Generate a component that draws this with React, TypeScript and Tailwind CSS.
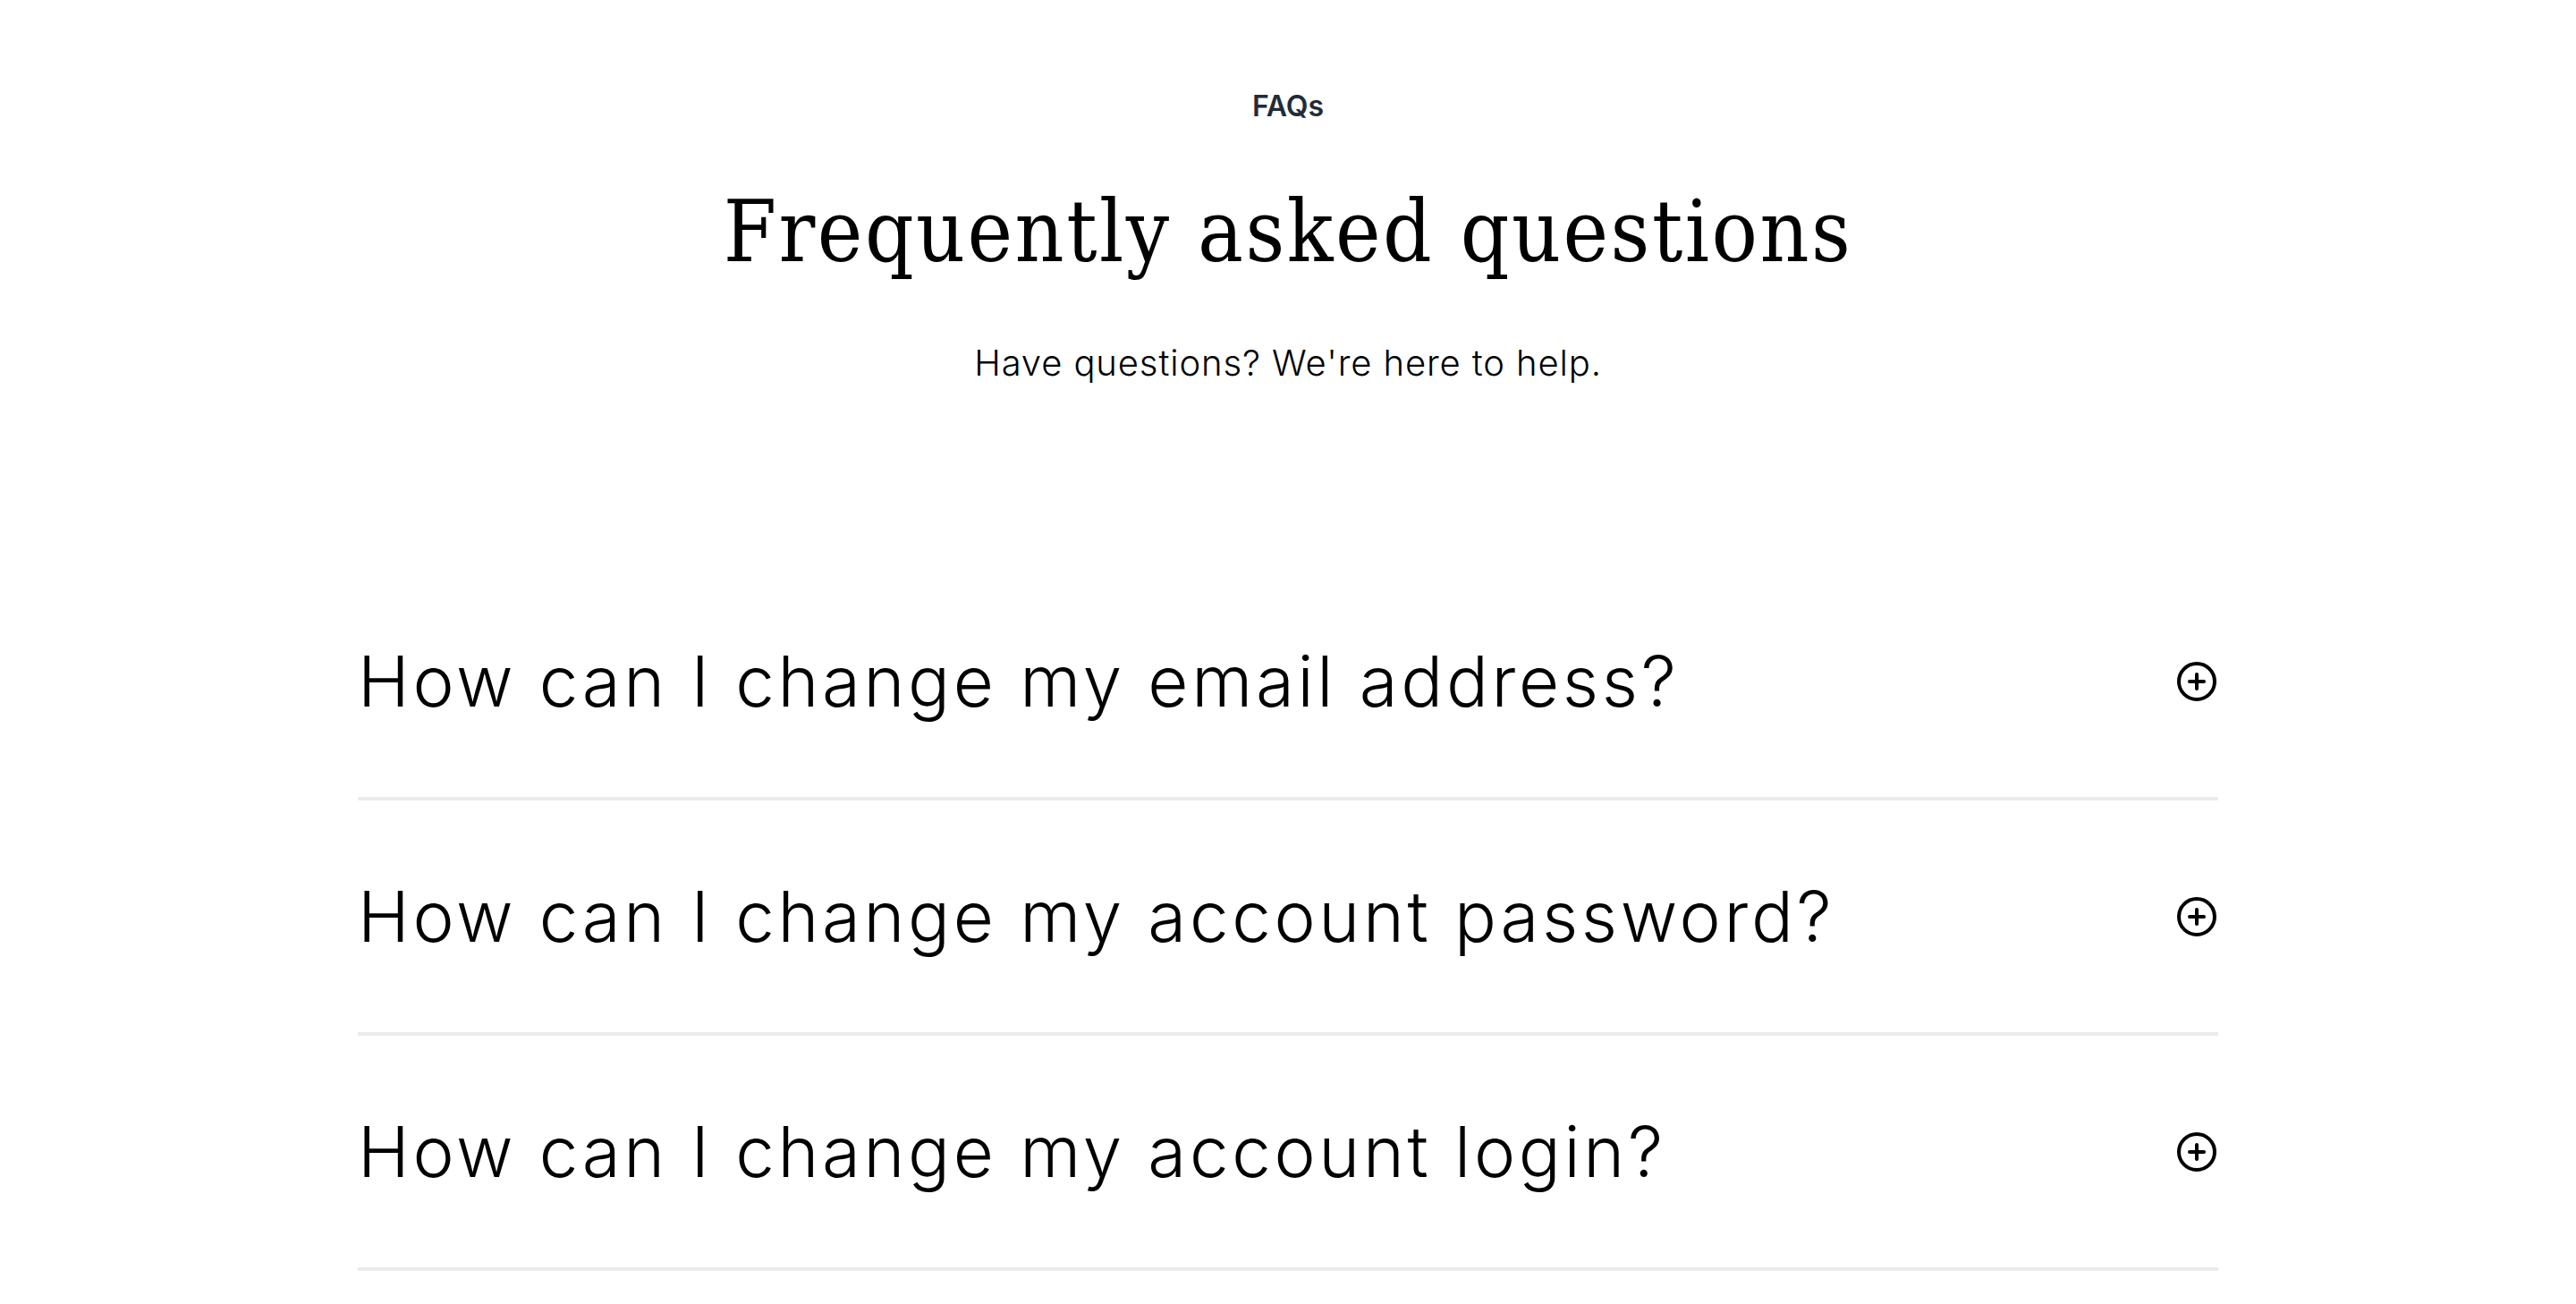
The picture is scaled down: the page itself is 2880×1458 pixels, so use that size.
import React from "react";
import { CirclePlus } from "lucide-react";

const questions = [
  "How can I change my email address?",
  "How can I change my account password?",
  "How can I change my account login?",
];

export default function App() {
  return (
    <div className="min-h-screen w-full bg-white">
      <section className="mx-auto w-[2080px] pt-[99px]">
        <div className="flex flex-col items-center text-center">
          <p className="font-['Inter',sans-serif] text-[32px] leading-[40px] font-semibold text-[#222b3a]">
            FAQs
          </p>
          <h1 className="mt-[63px] font-['DejaVu_Serif_Condensed','DejaVu_Serif',serif] font-stretch-condensed text-[95px] leading-[115px] font-normal tracking-[0.026em] text-black">
            Frequently asked questions
          </h1>
          <p className="mt-[64px] font-['Inter',sans-serif] text-[40px] leading-[50px] font-light tracking-[0.022em] text-black">
            Have questions? We're here to help.
          </p>
        </div>
        <div className="mt-[201px]">
          {questions.map((q) => (
            <div
              key={q}
              className="flex items-center justify-between border-b-4 border-[#ebebeb] py-[81px]"
            >
              <span className="font-['Inter',sans-serif] text-[78px] leading-[97px] font-light tracking-[0.047em] text-black">
                {q}
              </span>
              <CirclePlus size={48} strokeWidth={2} className="shrink-0 text-black" />
            </div>
          ))}
        </div>
      </section>
    </div>
  );
}
